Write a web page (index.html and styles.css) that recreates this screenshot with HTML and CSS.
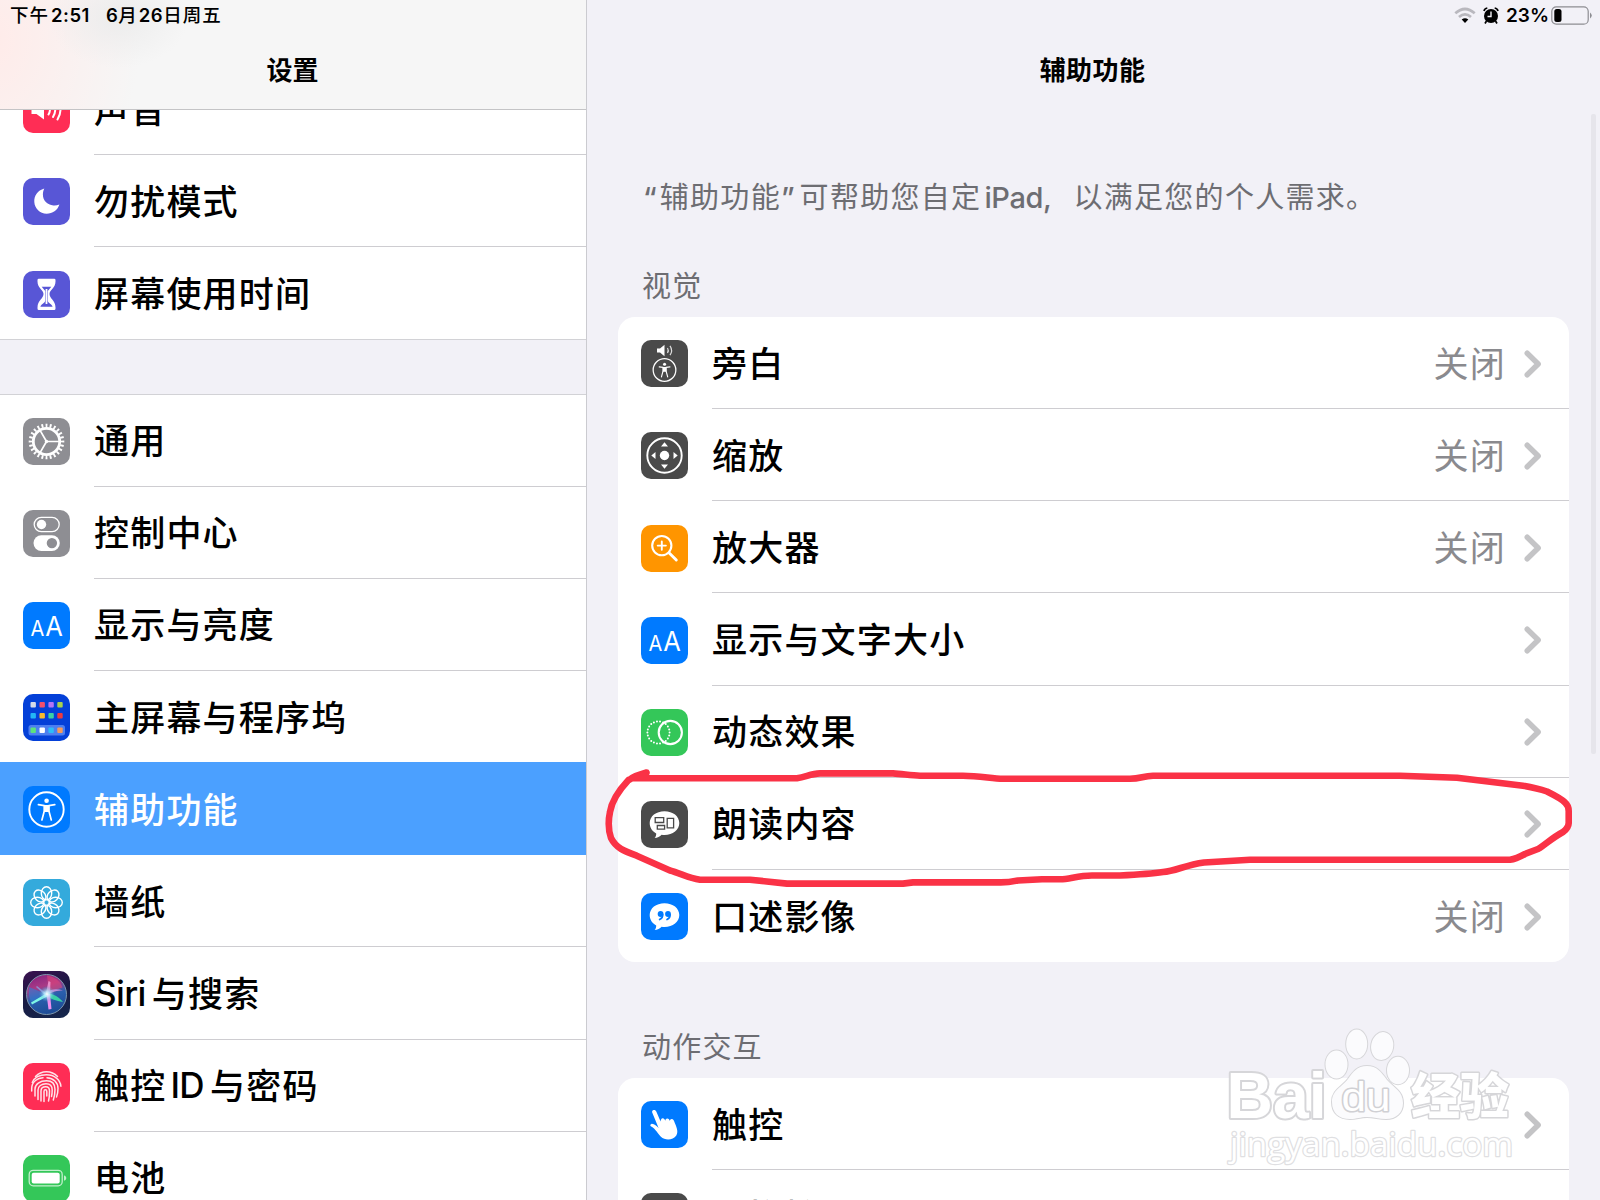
FILE: index.html
```
<!doctype html>
<html lang="zh-CN">
<head>
<meta charset="UTF-8">
<title>设置</title>
<link rel="stylesheet" href="styles.css">
</head>
<body>
<!-- shapes used more than once -->
<svg class="defs" width="0" height="0">
  <symbol id="chevron" viewBox="0 0 18 28"><path d="M3.2 3.2 14.2 14 3.2 24.8"/></symbol>
  <symbol id="person" viewBox="0 0 47 47">
    <circle cx="23.5" cy="23.5" r="17.2" fill="none" stroke="#fff" stroke-width="1.9"/>
    <circle cx="23.6" cy="14.8" r="2.3" fill="#fff"/>
    <path d="M15.4 18.7 21.3 19.6V25L18.9 34M31.8 18.7 25.9 19.6V25L28.3 34" fill="none" stroke="#fff" stroke-width="1.7" stroke-linecap="round" stroke-linejoin="round"/>
    <path d="M20.8 19h5.6v7h-5.6z" fill="#fff"/>
  </symbol>
  <symbol id="aa" viewBox="0 0 47 47">
    <text x="7.6" y="33.8" font-size="21" textLength="13.8" lengthAdjust="spacingAndGlyphs">A</text>
    <text x="22.2" y="33.8" font-size="27" textLength="17.6" lengthAdjust="spacingAndGlyphs">A</text>
  </symbol>
  <symbol id="bubble" viewBox="0 0 47 47">
    <path d="M23.5 10.2c8.4 0 14.8 5 14.8 11.9S31.900 34 23.500 34c-1 0-2-.1-2.900-.2-1.700 1.700-4.100 3.100-7 3.300 1.100-1.200 1.700-2.800 1.600-4.700C11.300 30.400 8.700 26.700 8.700 22.100c0-6.900 6.400-11.900 14.800-11.900z" fill="#fff"/>
  </symbol>
</svg>

<div class="sidebar">
  <div class="bar">
    <div class="status"><span class="time">下午<b>2:51</b></span><span class="date"><b>6</b>月<b>26</b>日周五</span></div>
    <h1>设置</h1>
  </div>
  <div class="list">
    <div class="row first">
      <svg class="icon pink" viewBox="0 0 47 47"><path d="M8.500 20h5l7.500-6.500v20L13.500 28h-5z" fill="#fff"/><path d="M25.500 18.500q3 5 0 10M30 16q4.500 7.500 0 15M34.500 13.500q6 10 0 20" fill="none" stroke="#fff" stroke-width="2" stroke-linecap="round"/></svg>
      <div class="cell">声音</div>
    </div>
    <div class="row">
      <svg class="icon purple" viewBox="0 0 47 47"><path d="M21.300 10.600C14.500 12.500 11 18 11.300 24c.4 6.600 5.700 11.700 12.300 11.700 6 0 10.900-3.400 12.800-9.200-2 .8-4 1.100-6 .9-6.200-.5-10.500-5-10.500-10.700 0-2.200.4-4.200 1.400-6.100z" fill="#fff"/></svg>
      <div class="cell">勿扰模式</div>
    </div>
    <div class="row end">
      <svg class="icon purple" viewBox="0 0 47 47"><path d="M14.500 9q0-1.300 1.300-1.300h15.400Q32.500 7.700 32.500 9v1.500c0 6.500-6 8.500-6 12.500 0 4.500 6 6.500 6 13.500v1q0 1.500-1.300 1.500H15.800Q14.500 39 14.500 37.500v-1C14.500 29.500 20.500 27.500 20.500 23 20.500 19 14.500 17 14.500 10.500z" fill="#fff"/><path d="M18.700 15.800h9.600L24.800 20v9.800c.6 2.700 4 3 4.800 6H17.400c.8-3 4.200-3.300 4.800-6V20z" fill="#5856d6"/><path d="M23.500 18v15" stroke="#fff" stroke-width="1.800"/></svg>
      <div class="cell">屏幕使用时间</div>
    </div>
    <div class="gap"></div>
    <div class="row">
      <svg class="icon gray" viewBox="0 0 47 47"><g fill="none" stroke="#fff"><circle cx="23.500" cy="23.500" r="16" stroke-width="3.600" pathLength="48" stroke-dasharray=".9 1.100" stroke-dashoffset=".45"/><circle cx="23.500" cy="23.500" r="13.200" stroke-width="2.800"/><path d="M23.500 23.500H37M23.500 23.500l-6.700-11.700M23.500 23.500l-6.700 11.700" stroke-width="1.700"/></g><circle cx="23.500" cy="23.500" r="1.700" fill="#fff"/></svg>
      <div class="cell">通用</div>
    </div>
    <div class="row">
      <svg class="icon gray" viewBox="0 0 47 47"><rect x="11.200" y="7.400" width="25" height="14.200" rx="7.100" fill="none" stroke="#fff" stroke-width="1.300"/><circle cx="18.500" cy="14.500" r="4.700" fill="#fff"/><rect x="10.500" y="25.200" width="26.300" height="15.800" rx="7.900" fill="#fff"/><circle cx="28.900" cy="33.100" r="5.200" fill="#8e8e93"/></svg>
      <div class="cell">控制中心</div>
    </div>
    <div class="row">
      <svg class="icon blue"><use href="#aa"/></svg>
      <div class="cell">显示与亮度</div>
    </div>
    <div class="row">
      <svg class="icon home" viewBox="0 0 47 47">
        <rect x="5.500" y="31" width="36.500" height="10.500" rx="2.500" fill="#4d7ff0"/>
        <rect x="7.500" y="8" width="5.400" height="5.400" rx="1" fill="#d5dbe8"/><rect x="16.500" y="8" width="5.400" height="5.400" rx="1" fill="#f4506e"/><rect x="25.400" y="8" width="5.400" height="5.400" rx="1" fill="#b573f5"/><rect x="34.300" y="8" width="5.400" height="5.400" rx="1" fill="#a8d24c"/>
        <rect x="7.500" y="19" width="5.400" height="5.400" rx="1" fill="#23b6f5"/><rect x="16.500" y="19" width="5.400" height="5.400" rx="1" fill="#f7bb2d"/><rect x="25.400" y="19" width="5.400" height="5.400" rx="1" fill="#3bd0a4"/><rect x="34.300" y="19" width="5.400" height="5.400" rx="1" fill="#ee3a3f"/>
        <rect x="7.500" y="33.500" width="5.400" height="5.400" rx="1" fill="#5ce27c"/><rect x="16.500" y="33.500" width="5.400" height="5.400" rx="1" fill="#fff"/><rect x="25.400" y="33.500" width="5.400" height="5.400" rx="1" fill="#2cbdf8"/><rect x="34.300" y="33.500" width="5.400" height="5.400" rx="1" fill="#f59a5a"/>
      </svg>
      <div class="cell">主屏幕与程序坞</div>
    </div>
    <div class="row selected">
      <svg class="icon blue"><use href="#person"/></svg>
      <div class="cell">辅助功能</div>
    </div>
    <div class="row">
      <svg class="icon cyan" viewBox="0 0 47 47"><g fill="none" stroke="#fff" stroke-width="1.400">
        <ellipse cx="23.500" cy="14.300" rx="5.200" ry="6.600"/><ellipse cx="23.500" cy="14.300" rx="5.200" ry="6.600" transform="rotate(45 23.500 23.500)"/><ellipse cx="23.500" cy="14.300" rx="5.200" ry="6.600" transform="rotate(90 23.500 23.500)"/><ellipse cx="23.500" cy="14.300" rx="5.200" ry="6.600" transform="rotate(135 23.500 23.500)"/><ellipse cx="23.500" cy="14.300" rx="5.200" ry="6.600" transform="rotate(180 23.500 23.500)"/><ellipse cx="23.500" cy="14.300" rx="5.200" ry="6.600" transform="rotate(225 23.500 23.500)"/><ellipse cx="23.500" cy="14.300" rx="5.200" ry="6.600" transform="rotate(270 23.500 23.500)"/><ellipse cx="23.500" cy="14.300" rx="5.200" ry="6.600" transform="rotate(315 23.500 23.500)"/>
      </g></svg>
      <div class="cell">墙纸</div>
    </div>
    <div class="row">
      <svg class="icon siri" viewBox="0 0 47 47">
        <defs>
          <linearGradient id="orb" x1=".3" y1="0" x2=".6" y2="1"><stop offset="0" stop-color="#8a2480"/><stop offset=".3" stop-color="#a83a86"/><stop offset=".55" stop-color="#2a5fae"/><stop offset="1" stop-color="#1c4a94"/></linearGradient>
          <radialGradient id="glow"><stop offset="0" stop-color="#fff"/><stop offset=".35" stop-color="#bff3ff" stop-opacity=".75"/><stop offset="1" stop-color="#5ad" stop-opacity="0"/></radialGradient>
        </defs>
        <circle cx="23.500" cy="23.500" r="20" fill="url(#orb)" stroke="#7d97ad" stroke-width="1"/>
        <path d="M24 4.500c7 1 13 5 15.500 12L26 21z" fill="#e0457a" opacity=".6"/>
        <path d="M23 23 6 16Q5 24 8 31z" fill="#2f7fd6" opacity=".6"/>
        <path d="M24 22 8 31.500l1 2L25 25z" fill="#7df5e6"/>
        <path d="M23 22 25.500 10l2 1L27 23z" fill="#f0a0dc" opacity=".8"/>
        <path d="M23 21.500c6-4 11-4 17-2-6 0-11 1-16 5z" fill="#bb8fd8"/>
        <path d="M24 22c7 1 12 4 16 9-7-1-12-3-17-6z" fill="#38cfa5"/>
        <path d="M23.500 23 25.500 38.500 28.500 38 27 23z" fill="#ee8fee"/>
        <path d="M24 23 14 15l-1 1 10 9z" fill="#8ca9ee" opacity=".7"/>
        <circle cx="24" cy="23" r="8" fill="url(#glow)"/>
      </svg>
      <div class="cell"><em>Siri</em>与搜索</div>
    </div>
    <div class="row">
      <svg class="icon pink" viewBox="0 0 47 47"><g fill="none" stroke="#ffe3e9" stroke-width="1.500" stroke-linecap="round">
        <path d="M12.500 13.500Q17 8.700 23.500 8.700T34.500 13.500"/>
        <path d="M9.300 19.500Q12.500 11.800 23.500 11.800c8 0 13.800 5 14.400 11.500"/>
        <path d="M8.700 28V25.500C8.700 18.500 15 14.800 20 14.800M24 14.800c6.500.4 11 4.700 11 10.700 0 3-.5 6-1.500 8.500"/>
        <path d="M12 33V26c0-4.800 5-8.200 11.500-8.200S32 22 32 26.500c0 3.500-.5 7-1.700 10.500"/>
        <path d="M15 36.500V27c0-3.700 3.500-6.200 8-6.200s6.200 2.700 6.200 6.200c0 2.300-.2 4.500-.7 6.500"/>
        <path d="M18 38V28c0-2.500 2-4.200 4.800-4.200s3.700 1.900 3.700 4.200c0 4-.2 7-1 10"/>
        <path d="M21 38.500V28.500q0-1.700 1.400-1.700t1.400 1.700V33"/>
      </g></svg>
      <div class="cell">触控<em class="mid">ID</em>与密码</div>
    </div>
    <div class="row">
      <svg class="icon green" viewBox="0 0 47 47"><rect x="6.200" y="15.400" width="33" height="15.400" rx="4" fill="none" stroke="#c1efcc" stroke-width="1.300"/><rect x="8.700" y="17.700" width="28" height="10.800" rx="2" fill="#fff"/><path d="M41 20.500c3 .6 3 4.600 0 5.200z" fill="#c1efcc"/></svg>
      <div class="cell">电池</div>
    </div>
  </div>
</div>

<div class="detail">
  <div class="bar">
    <div class="status">
      <svg class="wifi" viewBox="0 0 22 17"><g fill="none" stroke="#b9b8be" stroke-width="2.700"><path d="M1.300 6.300Q11-2.300 20.700 6.300"/><path d="M5 10Q11 4.800 17 10"/></g><path d="M7.700 12.500Q11 10 14.300 12.500L11 16z"/></svg>
      <svg class="alarm" viewBox="0 0 16 17"><circle cx="8" cy="9" r="7"/><path d="M1 4Q1.500 1.500 4.300 1M15 4Q14.500 1.500 11.700 1M3.500 14l-1.500 2.500M12.500 14l1.500 2.500" stroke="#000" stroke-width="1.700" fill="none"/><path d="M8 4.500V9.500H4.500" stroke="#f2f1f7" stroke-width="1.400" fill="none"/></svg>
      <span>23%</span>
      <svg class="battery" viewBox="0 0 42 19"><rect x=".8" y=".8" width="36.400" height="17.400" rx="4.500" fill="none" stroke="#8d8d92" stroke-width="1.200"/><rect x="3.300" y="3" width="7.200" height="13" rx="2.500"/><path d="M39 6.500q3.500 3 0 6z" fill="#8d8d92"/></svg>
    </div>
    <h1>辅助功能</h1>
  </div>
  <p class="intro">“<span>辅助功能</span>”<span class="help">可帮助您自定</span><em>iPad,</em><span>以满足您的个人需求。</span></p>
  <h2>视觉</h2>
  <div class="card">
    <div class="row">
      <svg class="icon dark" viewBox="0 0 47 47"><path d="M16 8.500h3l4.500-3.800v11.600L19 12.500h-3z" fill="#fff"/><path d="M26.500 8q1.600 2.500 0 5M29 5.800q3.200 4.700 0 9.400" fill="none" stroke="#ddd" stroke-width="1.200"/><use href="#person" x="8" y="14.500" width="31" height="31"/></svg>
      <div class="cell">旁白<span>关闭</span><svg class="go"><use href="#chevron"/></svg></div>
    </div>
    <div class="row">
      <svg class="icon dark" viewBox="0 0 47 47"><circle cx="23.500" cy="23.500" r="17.200" fill="none" stroke="#fff" stroke-width="1.900"/><circle cx="23.500" cy="23.500" r="4.700" fill="#fff"/><path d="M23.500 10.300l3.500 4.200h-7zM23.500 36.700l3.500-4.200h-7zM10.300 23.500l4.200-3.500v7zM36.700 23.500l-4.200-3.500v7z" fill="#fff"/></svg>
      <div class="cell">缩放<span>关闭</span><svg class="go"><use href="#chevron"/></svg></div>
    </div>
    <div class="row">
      <svg class="icon orange" viewBox="0 0 47 47"><g fill="none" stroke="#fff" stroke-linecap="round"><circle cx="20.800" cy="20.600" r="9.600" stroke-width="2.100"/><path d="M20.800 16.500v8.200M16.700 20.600h8.200" stroke-width="1.900"/><path d="M28.200 28 35.300 35" stroke-width="2.900"/></g></svg>
      <div class="cell">放大器<span>关闭</span><svg class="go"><use href="#chevron"/></svg></div>
    </div>
    <div class="row">
      <svg class="icon blue"><use href="#aa"/></svg>
      <div class="cell">显示与文字大小<svg class="go"><use href="#chevron"/></svg></div>
    </div>
    <div class="row">
      <svg class="icon green" viewBox="0 0 47 47"><circle cx="29.300" cy="23.500" r="11.600" fill="none" stroke="#fff" stroke-width="2.100"/><circle cx="17.500" cy="23.500" r="11.100" fill="none" stroke="#fff" stroke-width="2" stroke-linecap="round" pathLength="66" stroke-dasharray="0 3"/></svg>
      <div class="cell">动态效果<svg class="go"><use href="#chevron"/></svg></div>
    </div>
    <div class="row">
      <svg class="icon dark" viewBox="0 0 47 47"><use href="#bubble"/><path d="M14.200 16.700h8.500v4.800h-8.500zM16.300 24.500h7.300v3.700h-7.300zM26.200 17.300h6.400v9.600h-6.400z" fill="none" stroke="#4a4a4a" stroke-width="1.300"/></svg>
      <div class="cell">朗读内容<svg class="go"><use href="#chevron"/></svg></div>
    </div>
    <div class="row">
      <svg class="icon blue" viewBox="0 0 47 47"><use href="#bubble"/><g fill="#007aff"><circle cx="19.600" cy="21" r="2.900"/><circle cx="27" cy="21" r="2.900"/></g><path d="M21.600 21.500q.4 3.400-3 5M29 21.500q.4 3.400-3 5" fill="none" stroke="#007aff" stroke-width="1.700" stroke-linecap="round"/></svg>
      <div class="cell">口述影像<span>关闭</span><svg class="go"><use href="#chevron"/></svg></div>
    </div>
  </div>
  <h2 class="second">动作交互</h2>
  <div class="card">
    <div class="row">
      <svg class="icon blue" viewBox="0 0 47 47"><path d="M12 9.200c1.300-.7 2.800 0 3.400 1.500l4.200 9.800c.2-1.800.8-3 2-3.200 1.300-.1 2.200.9 2.600 2.400.4-1.500 1-2.300 2.100-2.300 1.300 0 2.200 1 2.500 2.600.3-1.300 1-2 2-1.900 1.400.1 2.200 1.300 3 3.800 2.600 5.800 3.400 9.200 1.500 12.600-3.300 4.700-11 5.200-15.400 1.200-3-2.700-5-7.600-9.700-10.200-1.200-.7-1.200-2.300.2-2.600 2.800-.4 5.200 2.300 7.200 4L11.400 12c-.5-1.300-.4-2.300.6-2.800z" fill="#fff"/></svg>
      <div class="cell">触控<svg class="go"><use href="#chevron"/></svg></div>
    </div>
    <div class="row">
      <svg class="icon dark" viewBox="0 0 47 47"></svg>
      <div class="cell">切换控制<svg class="go"><use href="#chevron"/></svg></div>
    </div>
  </div>
  <div class="scrollbar"></div>
</div>

<svg class="marker" viewBox="0 0 1600 1200">
  <path d="M646.500 772.500Q634 776 629 780M632 778.300H797C806 777 811 773.600 820 773.400H893C903 774 911 775.500 920 775.700H963C980 776 992 778.600 1003 778.800H1130C1141 778.500 1143 776 1153 775.700H1400L1457 777.700 1523 785.700Q1537 788 1547 791.500C1556 796 1562 799 1565 802.500Q1569 806 1568.700 812V823Q1568.500 828 1563 832C1552 838 1546 844 1538 849L1525 854Q1516 859 1510 859.800H1250L1204 862.500C1185 865 1176 871 1163 872Q1150 874 1120 875.500H1092C1078 875.500 1070 879 1060 879.300H1042L1018 880.500Q1008 882.500 1000 882.400H913L903 883.600H787L750 879.700H700C688 878 680 873 670 870.500L636.700 855.700C624 851 616 848 611 838Q607 826 610 812C612 799 621 788 628.500 780"/>
</svg>

<svg class="watermark" viewBox="0 0 300 150">
  <g class="paw">
    <ellipse cx="116.500" cy="64.500" rx="11" ry="14"/><ellipse cx="136.700" cy="44" rx="10.500" ry="14.500"/><ellipse cx="162.200" cy="46" rx="11" ry="14" transform="rotate(10 162 46)"/><ellipse cx="178" cy="70.500" rx="11" ry="13.700"/>
    <path d="M147 66c10 0 14 6 20 14 7 8 16 11 16 23 0 10-7 16-17 16-7 0-12-2-19-2s-10 2-17 2c-11 0-18-6-18-17 0-12 10-15 16-23 5-7 9-13 19-13z"/>
  </g>
  <text class="big" x="6.500" y="117.500" font-size="65" textLength="100" lengthAdjust="spacingAndGlyphs">Bai</text>
  <text class="du" x="121.500" y="111" font-size="40" textLength="49" lengthAdjust="spacingAndGlyphs">du</text>
  <text class="cn" x="191" y="114" font-size="49">经验</text>
  <text class="url" x="10" y="156" font-size="33" textLength="283" lengthAdjust="spacingAndGlyphs">jingyan.baidu.com</text>
</svg>
</body>
</html>
```
FILE: styles.css
```
* {box-sizing: border-box;}
body {margin:0;width:1600px;height:1200px;overflow:hidden;position:relative;display:flex;background:#f2f1f7;color:#000;font-family:Inter,"Noto Sans CJK SC",sans-serif;}
h1,h2,p {margin:0;}
em {font-style:normal;letter-spacing:-.600px;margin-right:6px;}
.mid {margin-left:4px;}
.cell em {padding-top:3px;}
.defs {position:absolute;}

.sidebar {width:587px;height:1200px;border-right:1px solid #cbcbd0;overflow:hidden;}
.detail {flex:1;height:1200px;overflow:hidden;position:relative;padding:0 31px;}

.bar {height:110px;}
.sidebar .bar {position:relative;border-bottom:1px solid #c4c4c6;background:radial-gradient(ellipse 70px 50px at 118px 18px,#ececec,rgba(244,244,244,0)),radial-gradient(ellipse 150px 190px at -10px 40px,#ffebe9,rgba(247,243,243,0)),#f6f6f6;}
.bar h1 {font-size:26px;line-height:38px;font-weight:700;text-align:center;padding-top:21px;}
.sidebar .bar h1 {padding-right:1px;}
.detail .bar {margin:0 -31px;}
.detail .bar h1 {padding-right:4px;letter-spacing:.4px;padding-left:2px;}
.status {height:31px;display:flex;align-items:center;font-size:18px;font-weight:500;white-space:nowrap;}
.sidebar .status {padding-left:10px;letter-spacing:1px;font-size:18.500px;line-height:28px;padding-bottom:1px;}
.status b {font-weight:600;letter-spacing:.5px;}
.time b {margin-left:2px;}
.date {margin-left:16px;}
.date b + b {margin-left:1px;}
.detail .status {justify-content:flex-end;padding-right:7px;font-weight:600;font-size:19px;}
.wifi {width:22px;height:17px;margin-right:7px;}
.alarm {width:16px;height:17px;margin-right:7px;}
.battery {width:42px;height:19px;margin-left:2px;}

.list {background:#fff;height:1090px;overflow:hidden;}
.row {height:92.150px;display:flex;align-items:center;padding-left:23.400px;font-size:35px;font-weight:500;}
.first {margin-top:-47px;}
.cell {flex:1;height:100%;margin-left:23.600px;border-bottom:1px solid #cecdd1;display:flex;align-items:center;letter-spacing:1.200px;white-space:nowrap;padding-bottom:3px;}
.end .cell {border-bottom:0;}
.gap {height:55.200px;background:#f2f1f7;border:1px solid #d2d2d6;border-left:0;border-right:0;}
.selected {position:relative;background:#4ba0ff;color:#fff;margin-top:-1px;height:93.150px;padding-top:1px;}
.selected .cell,.list .row:last-child .cell {border-color:transparent;}

.icon {width:47px;height:47px;border-radius:10px;flex:none;margin-top:1.500px;}
#aa text {fill:#fff;font-family:Inter,sans-serif;font-weight:400;letter-spacing:0;}
.pink {background:#ff2d55;}
.purple {background:#5856d6;}
.gray {background:#8e8e93;}
.blue {background:#007aff;}
.home {background:#0440d8;}
.cyan {background:#34aadc;}
.siri {background:linear-gradient(160deg,#3b1150,#171a42 50%,#16284e);}
.green {background:#34c759;}
.orange {background:#ff9500;}
.dark {background:#4a4a4a;}

.intro {font-size:29px;line-height:40px;font-weight:500;color:#6d6d72;padding-left:25px;margin-top:68px;white-space:nowrap;}
.intro span {letter-spacing:1.300px;font-weight:400;margin-left:3px;}
.intro .help {margin-left:5px;}
.intro em {letter-spacing:-.400px;margin:0 19px 0 3px;}
h2 {font-size:29px;line-height:40px;font-weight:400;color:#6d6d72;letter-spacing:1.200px;padding-left:24px;margin-top:49px;}
.second {margin-top:66px;}
.card {background:#fff;border-radius:17px;margin-top:10px;}
.card .cell span {margin-left:auto;color:#8a8a8e;font-weight:400;}
.card .row:last-child .cell {border-bottom:0;}
.go {width:18px;height:28px;margin:5px 27px 0 auto;fill:none;stroke:#c4c4c6;stroke-width:5.400px;stroke-linecap:round;stroke-linejoin:round;}
.cell span + .go {margin-left:18px;}
.scrollbar {position:absolute;right:4px;top:114px;width:5px;height:640px;border-radius:2px;background:#e6e5eb;}

/* hand drawn ring */
.marker {position:absolute;left:0;top:0;width:1600px;height:1200px;fill:none;stroke:#fa3246;stroke-width:6.600px;stroke-linecap:round;stroke-linejoin:round;}

.watermark {position:absolute;left:1220px;top:1000px;width:300px;height:150px;overflow:visible;fill:#fff;stroke:#d6d6d9;stroke-width:2px;paint-order:stroke;stroke-linejoin:round;}
.paw {fill:#fbfbfd;}
.watermark .big {font-family:"Liberation Sans",sans-serif;font-weight:700;stroke-width:4px;}
.watermark .du {font-family:"Liberation Sans",sans-serif;fill:#fff;stroke:#d0d0d4;stroke-width:3px;}
.watermark .cn {font-family:"Noto Sans CJK SC",sans-serif;font-weight:900;stroke-width:3px;}
.watermark .url {font-family:"Open Sans",sans-serif;stroke:#dfdfe2;stroke-width:2.500px;}
```
